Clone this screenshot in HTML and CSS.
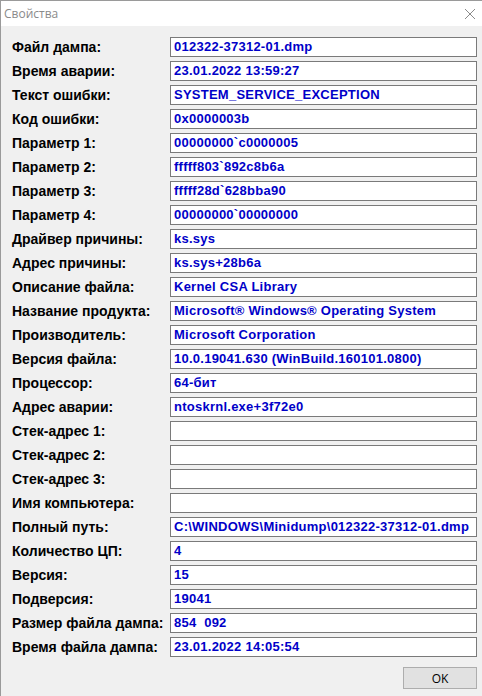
FILE: index.html
```html
<!DOCTYPE html>
<html lang="ru">
<head>
  <meta charset="UTF-8" />
  <title>Свойства</title>
  <link rel="stylesheet" href="styles.css">
</head>
<body>
  <div class="window">
    <div class="titlebar">
      <span class="title">Свойства</span>
      <svg class="close" width="12" height="12" viewBox="0 0 12 12">
        <path d="M1 1 L11 11 M11 1 L1 11" stroke="#8a8a8a" stroke-width="1" fill="none" />
      </svg>
    </div>
    <div class="content">
      <div class="props">
        <div class="label">Файл дампа:</div><div class="value">012322-37312-01.dmp</div>
        <div class="label">Время аварии:</div><div class="value">23.01.2022 13:59:27</div>
        <div class="label">Текст ошибки:</div><div class="value">SYSTEM_SERVICE_EXCEPTION</div>
        <div class="label">Код ошибки:</div><div class="value">0x0000003b</div>
        <div class="label">Параметр 1:</div><div class="value">00000000`c0000005</div>
        <div class="label">Параметр 2:</div><div class="value">fffff803`892c8b6a</div>
        <div class="label">Параметр 3:</div><div class="value">fffff28d`628bba90</div>
        <div class="label">Параметр 4:</div><div class="value">00000000`00000000</div>
        <div class="label">Драйвер причины:</div><div class="value">ks.sys</div>
        <div class="label">Адрес причины:</div><div class="value">ks.sys+28b6a</div>
        <div class="label">Описание файла:</div><div class="value">Kernel CSA Library</div>
        <div class="label">Название продукта:</div><div class="value">Microsoft® Windows® Operating System</div>
        <div class="label">Производитель:</div><div class="value">Microsoft Corporation</div>
        <div class="label">Версия файла:</div><div class="value">10.0.19041.630 (WinBuild.160101.0800)</div>
        <div class="label">Процессор:</div><div class="value">64-бит</div>
        <div class="label">Адрес аварии:</div><div class="value">ntoskrnl.exe+3f72e0</div>
        <div class="label">Стек-адрес 1:</div><div class="value"></div>
        <div class="label">Стек-адрес 2:</div><div class="value"></div>
        <div class="label">Стек-адрес 3:</div><div class="value"></div>
        <div class="label">Имя компьютера:</div><div class="value"></div>
        <div class="label">Полный путь:</div><div class="value">C:\WINDOWS\Minidump\012322-37312-01.dmp</div>
        <div class="label">Количество ЦП:</div><div class="value">4</div>
        <div class="label">Версия:</div><div class="value">15</div>
        <div class="label">Подверсия:</div><div class="value">19041</div>
        <div class="label">Размер файла дампа:</div><div class="value">854&nbsp;&nbsp;092</div>
        <div class="label">Время файла дампа:</div><div class="value">23.01.2022 14:05:54</div>
      </div>
      <div class="buttons">
        <button class="ok-btn">OK</button>
      </div>
    </div>
  </div>
</body>
</html>
```

FILE: styles.css
```css
body {
  margin: 0;
  background-color: #f0f0f0;
  font-family: "Liberation Sans", Arial, sans-serif;
}
.window {
  height: 695px;
  border-top: 1px solid #9a9a9a;
  border-left: 1px solid #9a9a9a;
  background-color: #f0f0f0;
}
.titlebar {
  height: 25px;
  background-color: #ffffff;
  display: flex;
  align-items: center;
  justify-content: space-between;
  padding: 0 6px 0 3px;
}
.title {
  font-family: "Open Sans", "Noto Sans", sans-serif;
  font-size: 12px;
  color: #8a8a8a;
}
.close {
  margin-top: 1px;
}
.content {
  padding: 11px 5px 0 11px;
}
.props {
  display: grid;
  grid-template-columns: 158px 1fr;
  row-gap: 4px;
}
.label {
  height: 20px;
  line-height: 20px;
  font-size: 14px;
  font-weight: bold;
  color: #000000;
  white-space: nowrap;
}
.value {
  height: 18px;
  line-height: 18px;
  border: 1px solid #7a7a7a;
  background-color: #ffffff;
  padding-left: 3px;
  font-size: 13px;
  letter-spacing: 0.25px;
  font-weight: bold;
  color: #0000c8;
  white-space: nowrap;
  overflow: hidden;
}
.buttons {
  display: flex;
  justify-content: flex-end;
  margin-top: 10px;
}
.ok-btn {
  width: 74px;
  height: 22px;
  border: 1px solid #adadad;
  background-color: #e1e1e1;
  font-family: "Open Sans", "Noto Sans", sans-serif;
  font-size: 12px;
  color: #000000;
  padding: 0;
}
```
